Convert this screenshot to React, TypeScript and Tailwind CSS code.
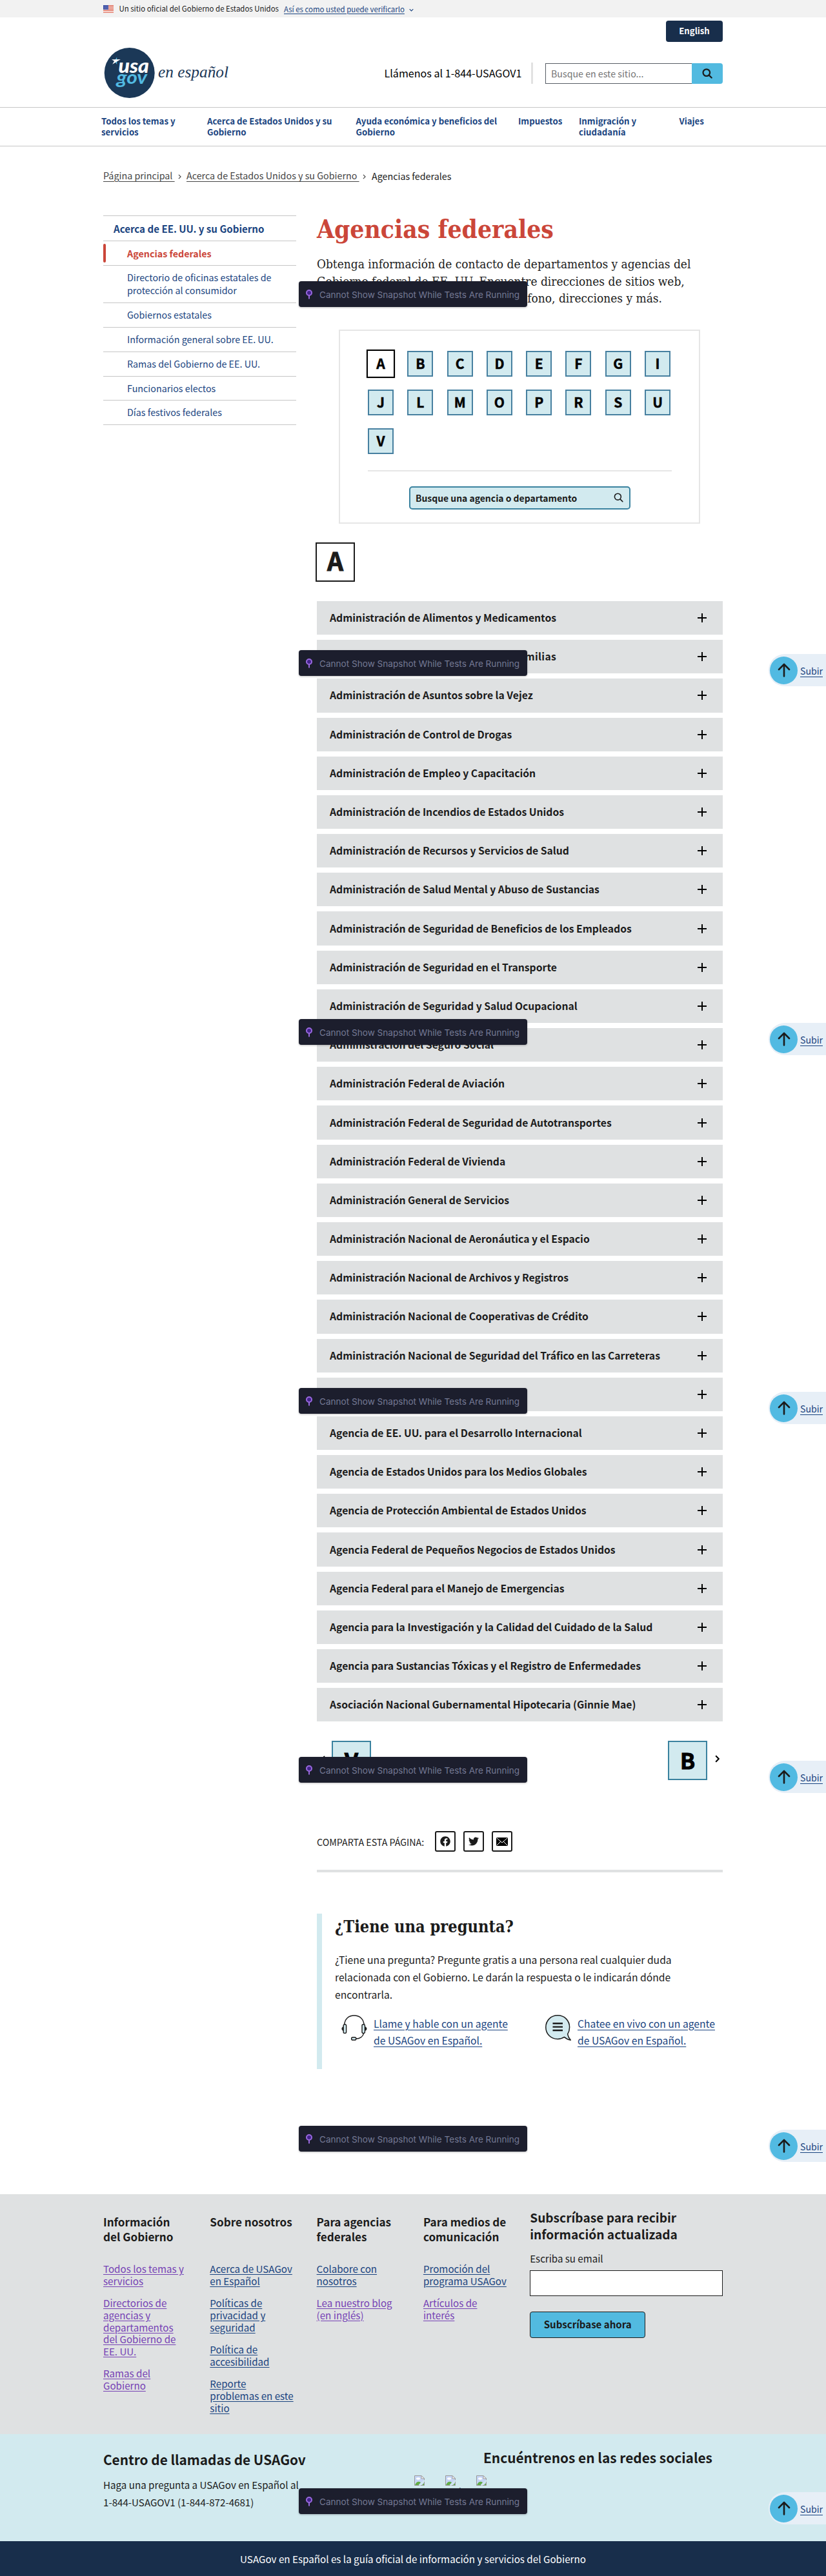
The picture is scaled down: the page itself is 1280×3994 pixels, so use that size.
import { FaFacebook, FaTwitter } from "react-icons/fa";

const agencies = [
  "Administración de Alimentos y Medicamentos",
  "Administración para los Niños y las Familias",
  "Administración de Asuntos sobre la Vejez",
  "Administración de Control de Drogas",
  "Administración de Empleo y Capacitación",
  "Administración de Incendios de Estados Unidos",
  "Administración de Recursos y Servicios de Salud",
  "Administración de Salud Mental y Abuso de Sustancias",
  "Administración de Seguridad de Beneficios de los Empleados",
  "Administración de Seguridad en el Transporte",
  "Administración de Seguridad y Salud Ocupacional",
  "Administración del Seguro Social",
  "Administración Federal de Aviación",
  "Administración Federal de Seguridad de Autotransportes",
  "Administración Federal de Vivienda",
  "Administración General de Servicios",
  "Administración Nacional de Aeronáutica y el Espacio",
  "Administración Nacional de Archivos y Registros",
  "Administración Nacional de Cooperativas de Crédito",
  "Administración Nacional de Seguridad del Tráfico en las Carreteras",
  "Agencia Central de Inteligencia",
  "Agencia de EE. UU. para el Desarrollo Internacional",
  "Agencia de Estados Unidos para los Medios Globales",
  "Agencia de Protección Ambiental de Estados Unidos",
  "Agencia Federal de Pequeños Negocios de Estados Unidos",
  "Agencia Federal para el Manejo de Emergencias",
  "Agencia para la Investigación y la Calidad del Cuidado de la Salud",
  "Agencia para Sustancias Tóxicas y el Registro de Enfermedades",
  "Asociación Nacional Gubernamental Hipotecaria (Ginnie Mae)",
];

const letters = "ABCDEFGIJLMOPRSUV".split("");

const navItems = [
  { lines: ["Todos los temas y", "servicios"], width: "w-[164px]" },
  { lines: ["Acerca de Estados Unidos y su", "Gobierno"], width: "w-[230.5px]" },
  { lines: ["Ayuda económica y beneficios del", "Gobierno"], width: "w-[251.5px]" },
  { lines: ["Impuestos"], width: "w-[94px]" },
  { lines: ["Inmigración y", "ciudadanía"], width: "w-[155.5px]" },
  { lines: ["Viajes"], width: "w-[60px]" },
];

const sideItems = [
  { lines: ["Directorio de oficinas estatales de", "protección al consumidor"], height: "h-[58px]" },
  { lines: ["Gobiernos estatales"], height: "h-[38px]" },
  { lines: ["Información general sobre EE. UU."], height: "h-[38px]" },
  { lines: ["Ramas del Gobierno de EE. UU."], height: "h-[38px]" },
  { lines: ["Funcionarios electos"], height: "h-[37px]" },
  { lines: ["Días festivos federales"], height: "h-[38px]" },
];

type FooterLink = { lines: string[]; visited?: boolean };
const footerColumns: { title: string[]; links: FooterLink[] }[] = [
  {
    title: ["Información", "del Gobierno"],
    links: [
      { lines: ["Todos los temas y", "servicios"], visited: true },
      { lines: ["Directorios de", "agencias y", "departamentos", "del Gobierno de", "EE. UU."], visited: true },
      { lines: ["Ramas del", "Gobierno"], visited: true },
    ],
  },
  {
    title: ["Sobre nosotros"],
    links: [
      { lines: ["Acerca de USAGov", "en Español"] },
      { lines: ["Políticas de", "privacidad y", "seguridad"] },
      { lines: ["Política de", "accesibilidad"] },
      { lines: ["Reporte", "problemas en este", "sitio"] },
    ],
  },
  {
    title: ["Para agencias", "federales"],
    links: [{ lines: ["Colabore con", "nosotros"] }, { lines: ["Lea nuestro blog", "(en inglés)"], visited: true }],
  },
  {
    title: ["Para medios de", "comunicación"],
    links: [{ lines: ["Promoción del", "programa USAGov"] }, { lines: ["Artículos de", "interés"], visited: true }],
  },
];

const noticeTops = ["top-[436px]", "top-[1008px]", "top-[1580px]", "top-[2152px]", "top-[2724px]", "top-[3296px]", "top-[3858px]"];
const backToTopTops = ["top-[1014px]", "top-[1586px]", "top-[2158px]", "top-[2730px]", "top-[3302px]", "top-[3864px]"];

function Lines({ lines }: { lines: string[] }) {
  return (
    <>
      {lines.map((l) => (
        <span key={l} className="block whitespace-nowrap">
          {l}
        </span>
      ))}
    </>
  );
}

function Flag() {
  return (
    <svg className="h-[12px] w-4" viewBox="0 0 16 12">
      <rect width="16" height="12" fill="#fff" />
      {[0, 2, 4, 6, 8, 10.6].map((y) => (
        <rect key={y} y={y} width="16" height="1.1" fill="#d9553f" />
      ))}
      <rect width="8" height="6.8" fill="#2a3f9d" />
      {[1, 3, 5].map((y) => [1, 3, 5, 6.7].map((x) => <rect key={`${x}-${y}`} x={x} y={y} width="0.8" height="0.8" fill="#fff" />))}
    </svg>
  );
}

function Logo() {
  return (
    <svg className="block h-[80px] w-[200px]" viewBox="0 0 200 80">
      <circle cx="40.7" cy="40" r="39" fill="#1b3857" />
      <path d="M21.2 15.5 V26.8 L18.8 23.5 V19.3 Z" fill="#52bae2" />
      <path d="M13 19.3 L26.8 19.1 L19.4 23.6 L14.2 26.8 L17 21.8 Z" fill="#fff" />
      <text x="23.5" y="40.3" textLength="47.5" lengthAdjust="spacingAndGlyphs" fontSize="31" fontWeight="900" fontStyle="italic" fontFamily="Lato, sans-serif" fill="#fff">
        usa
      </text>
      <text x="20.5" y="57.3" textLength="47.5" lengthAdjust="spacingAndGlyphs" fontSize="28" fontWeight="700" fontStyle="italic" fontFamily="Lato, sans-serif" fill="#52bae2">
        gov
      </text>
      <text x="85" y="46.7" textLength="109" lengthAdjust="spacingAndGlyphs" fontSize="26" fontStyle="italic" fontFamily="'Liberation Serif', serif" fill="#1b3857">
        en español
      </text>
    </svg>
  );
}

function SearchIcon({ size, stroke }: { size: number; stroke: number }) {
  return (
    <svg width={size} height={size} viewBox="0 0 16 16" fill="none" stroke="#1b1b1b" strokeWidth={stroke} strokeLinecap="round">
      <circle cx="6.8" cy="6.6" r="5.3" />
      <path d="M10.7 10.6 L14.7 14.5" />
    </svg>
  );
}

function Chevron({ className }: { className: string }) {
  return (
    <svg className={className} viewBox="0 0 6 10" fill="none" stroke="currentColor">
      <path d="M1 1 L5 5 L1 9" />
    </svg>
  );
}

function Headset() {
  return (
    <svg className="h-10 w-10" viewBox="0 0 40 40" fill="none" stroke="#1b1b1b" strokeWidth="1.4">
      <path d="M4.6 16 C5 6.5 11 1 19.8 1 C28.6 1 34.6 6.5 35.2 16" />
      <rect x="3.2" y="14.8" width="4.4" height="13.6" rx="2" fill="#d2eaef" />
      <rect x="32" y="14.8" width="4.4" height="13.6" rx="2" fill="#d2eaef" />
      <path d="M2.8 18 C-0.3 19.5 -0.3 23.5 2.8 25 Z" fill="#1b1b1b" stroke="none" />
      <path d="M36.8 18 C40.3 19.5 40.3 23.5 36.8 25 Z" fill="#1b1b1b" stroke="none" />
      <path d="M34.6 28.5 C33.5 33.5 29 37 22.5 37" />
      <rect x="15.6" y="34.8" width="7.2" height="4.2" rx="2.1" fill="#d2eaef" />
    </svg>
  );
}

function Chat() {
  return (
    <svg className="h-10 w-10" viewBox="0 0 40 40">
      <path
        d="M19.2 0.8 C8.6 0.8 0.8 8.8 0.8 19.2 C0.8 29.6 8.8 37.4 19.2 37.4 C23.2 37.4 26.6 36.4 29.4 34.4 C32.4 37 36 38.6 39.2 39 C36.8 36.4 35.2 33.4 34.6 29.8 C36.6 26.6 37.6 23.2 37.6 19.2 C37.6 8.8 29.8 0.8 19.2 0.8 Z"
        fill="#d2eaef"
        stroke="#1b1b1b"
        strokeWidth="1.5"
      />
      <path d="M11.5 13.2 H27 M11.5 18.6 H27 M11.5 24 H27" stroke="#1b1b1b" strokeWidth="2.4" />
    </svg>
  );
}

function BrokenImage() {
  return (
    <svg className="block h-4 w-4" viewBox="0 0 16 16">
      <path d="M0.5 0.5 H11 L15.5 5 V15.5 H0.5 Z" fill="#c6d5f5" stroke="#9a9a9a" />
      <path d="M11 0.5 V5 H15.5 Z" fill="#fff" stroke="#9a9a9a" />
      <ellipse cx="6" cy="5" rx="3" ry="1.7" fill="#fff" />
      <path d="M1 15 C3 9.5 7 8.5 10 11 L6.5 15 Z" fill="#63ad46" />
      <path d="M12 15 L15 12 V15 Z" fill="#63ad46" />
      <path d="M8 15.8 L16 7.8" stroke="#d2eaef" strokeWidth="2" />
    </svg>
  );
}

function Notice({ top }: { top: string }) {
  return (
    <div className={`absolute left-[463px] flex h-10 w-[354px] items-center rounded-[4px] bg-[#1c1e2d] pl-[11px] shadow-[0_1px_3px_rgba(0,0,0,0.25)] ${top}`}>
      <svg className="h-[15px] w-[10px]" viewBox="0 0 10 15" fill="none" stroke="#9969de">
        <circle cx="5" cy="5" r="4" strokeWidth="2" fill="#43228c" />
        <path d="M5 9 V14.5" strokeWidth="2" />
      </svg>
      <span className="ml-[11px] mt-px whitespace-nowrap font-['Inter',sans-serif] text-[13.58px] leading-5 text-[#747994]">
        Cannot Show Snapshot While Tests Are Running
      </span>
    </div>
  );
}

function BackToTop({ top }: { top: string }) {
  return (
    <a className={`absolute right-0 flex h-[50px] w-[89px] items-center rounded-l-full bg-[#e7eff7] pl-[2px] ${top}`}>
      <span className="flex h-[43px] w-[43px] items-center justify-center rounded-full bg-[#52bae2]">
        <svg className="h-[22px] w-5" viewBox="0 0 20 22" fill="none" stroke="#1b1b1b" strokeWidth="2.6" strokeLinecap="round" strokeLinejoin="round">
          <path d="M10 20.5 V2 M2 10 L10 1.8 L18 10" />
        </svg>
      </span>
      <span className="ml-1 mt-px text-[14.09px] leading-5 text-[#1a4480] underline underline-offset-[3px]">Subir</span>
    </a>
  );
}

export default function App() {
  return (
    <div className="relative h-[3994px] w-[1280px] overflow-hidden bg-white font-['Noto_Sans_CJK_SC',sans-serif] text-[#1b1b1b]">
      {/* Government banner */}
      <div className="flex h-[27px] items-center bg-[#f2f2f2] pl-[160px] text-[11.43px] leading-[27px]">
        <Flag />
        <span className="ml-[8.5px] w-[255.5px] whitespace-nowrap">Un sitio oficial del Gobierno de Estados Unidos</span>
        <a className="mt-[2px] whitespace-nowrap text-[#1a4480] underline underline-offset-2">Así es como usted puede verificarlo</a>
        <Chevron className="ml-[8px] mt-[3px] h-[7px] w-[5px] rotate-90 stroke-[1.6] text-[#1a4480]" />
      </div>

      {/* Header */}
      <header className="flex h-[139px] justify-between pl-[160px] pr-[160px]">
        <div className="pt-[46px]">
          <Logo />
        </div>
        <div className="flex flex-col items-end pt-[5px]">
          <a className="flex h-[33px] w-[88px] items-center justify-center rounded-[4px] bg-[#182e4b] pb-px text-[13.17px] font-bold text-white">English</a>
          <div className="mt-[31px] flex h-[34px] items-center">
            <span className="w-[227.5px] whitespace-nowrap text-[16.12px] leading-[34px] text-black">Llámenos al 1-844-USAGOV1</span>
            <span className="h-[33px] w-[3px] bg-[#e2e2e2]" />
            <div className="ml-[19px] mt-[2px] flex h-8 w-[275px]">
              <div className="flex w-[227px] items-center border border-r-0 border-[#565c65] pl-[8px] text-[14.22px] leading-5 text-[#757575]">
                Busque en este sitio...
              </div>
              <button className="flex w-12 items-center justify-center rounded-r-[4px] bg-[#52bae0]">
                <SearchIcon size={16} stroke={2.2} />
              </button>
            </div>
          </div>
        </div>
      </header>
      <nav className="flex h-[61px] border-y border-[#c6c6c6] pl-[157px] pt-[12px] text-[13.25px] font-bold leading-[17px] text-[#1a4480]">
        {navItems.map((n) => (
          <a key={n.lines[0]} className={n.width}>
            <Lines lines={n.lines} />
          </a>
        ))}
      </nav>

      {/* Breadcrumb */}
      <div className="mt-[35px] flex h-5 items-center whitespace-pre pl-[160px] text-[14.3px] leading-5 text-[#454545]">
        <a className="w-[116px] underline underline-offset-[3px]">Página principal </a>
        <Chevron className="mt-1 h-[8px] w-[5px] stroke-[1.4]" />
        <a className="ml-[8px] w-[274px] underline underline-offset-[3px]">Acerca de Estados Unidos y su Gobierno </a>
        <Chevron className="-ml-px mt-1 h-[8px] w-[5px] stroke-[1.4]" />
        <span className="ml-[9px] mt-[2px] text-[#1b1b1b]">Agencias federales</span>
      </div>

      <div className="flex pl-[160px]">
        {/* Side navigation */}
        <aside className="mt-[52px] w-[299px] border-t border-[#c6c6c6] text-[14.3px] leading-5 text-[#1a4480]">
          <a className="flex h-[39px] items-center border-b border-[#c6c6c6] pl-4 text-[15.1px] font-bold">Acerca de EE. UU. y su Gobierno</a>
          <a className="flex h-[38px] items-center border-b border-[#c6c6c6] font-bold text-[#cb4639]">
            <span className="h-[29px] w-1 rounded-[2px] bg-[#cb4639]" />
            <span className="ml-[33px]">Agencias federales</span>
          </a>
          {sideItems.map((s) => (
            <a key={s.lines[0]} className={`flex flex-col justify-center border-b border-[#c6c6c6] pb-px pl-[37px] ${s.height}`}>
              <Lines lines={s.lines} />
            </a>
          ))}
        </aside>

        {/* Main column */}
        <main className="ml-8 w-[629px] pt-[51.4px]">
          <h1 className="h-[62.6px] whitespace-nowrap font-['DejaVu_Serif_Condensed','DejaVu_Serif',serif] text-[38.7px] font-bold leading-[46px] text-[#cb4639]">
            Agencias federales
          </h1>
          <p className="h-[115px] font-['DejaVu_Serif_Condensed','DejaVu_Serif',serif] text-[18.96px] leading-[26.7px]">
            <Lines
              lines={[
                "Obtenga información de contacto de departamentos y agencias del",
                "Gobierno federal de EE. UU. Encuentre direcciones de sitios web,",
                "correos electrónicos, números de teléfono, direcciones y más.",
              ]}
            />
          </p>

          <section className="ml-[34px] h-[301px] w-[560px] border-2 border-[#e6e6e6] px-[43px] pt-[31px]">
            <div className="flex flex-wrap gap-x-[21.3px] gap-y-5">
              {letters.map((l) =>
                l === "A" ? (
                  <a key={l} className="-m-[2px] flex h-11 w-11 items-center justify-center border-2 border-black bg-white pb-px text-[21px] font-bold leading-9 text-black shadow-[0_0_1px_rgba(0,0,0,0.6)] [-webkit-text-stroke:0.5px_#000]">
                    {l}
                  </a>
                ) : (
                  <a key={l} className="flex h-10 w-10 items-center justify-center border-2 border-[#4780a0] bg-[#d2eaef] pb-px text-[21px] font-bold leading-9 text-black [-webkit-text-stroke:0.5px_#000]">
                    {l}
                  </a>
                ),
              )}
            </div>
            <div className="mt-[25px] h-[2px] w-[471px] bg-[#e6e6e6]" />
            <div className="ml-[64px] mt-[23px] flex h-9 w-[343px] items-center justify-between rounded-[5px] border-2 border-[#3a829f] bg-[#d2eaef] pl-[8px] pr-[9px] text-[13.93px] font-bold leading-5">
              <span>Busque una agencia o departamento</span>
              <SearchIcon size={15} stroke={1.7} />
            </div>
          </section>

          <h2 className="-ml-[2px] mt-[29px] flex h-[61px] w-[61px] items-center justify-center border-2 border-[#1b1b1b] pb-[7px] text-[39px] font-bold leading-[50px] [-webkit-text-stroke:1px_#1b1b1b]">A</h2>

          <ul className="mt-[30px] flex flex-col gap-2">
            {agencies.map((a, i) => (
              <li key={a} className="flex h-[52.2px] items-center justify-between bg-[#dfe1e2] pl-5 pr-[25px] text-[15.71px] font-bold">
                <span className={`whitespace-nowrap leading-6 ${i === 1 ? "tracking-[0.35px]" : ""}`}>{a}</span>
                <svg className="h-[14px] w-[14px]" viewBox="0 0 14 14" stroke="#000" strokeWidth="2" shapeRendering="crispEdges">
                  <path d="M7 0 V14 M0 7 H14" />
                </svg>
              </li>
            ))}
          </ul>

          <div className="mt-[30px] flex h-[61px] items-center justify-between pr-[5px] text-[34px] font-bold leading-[50px] text-black">
            <div className="flex items-center">
              <Chevron className="ml-[7px] mr-[10px] h-[12px] w-[6px] -translate-y-[3px] rotate-180 stroke-[1.8]" />
              <a className="flex h-[61px] w-[61px] items-center justify-center border-2 border-[#3a829f] bg-[#d2eaef] pb-px [-webkit-text-stroke:1px_#000]">V</a>
            </div>
            <div className="flex items-center">
              <a className="flex h-[61px] w-[61px] items-center justify-center border-2 border-[#3a829f] bg-[#d2eaef] pb-px [-webkit-text-stroke:1px_#000]">B</a>
              <Chevron className="mb-[6px] ml-3 h-[12px] w-[7px] stroke-[1.8]" />
            </div>
          </div>

          <div className="mt-[79px] flex h-8 items-center gap-3 text-[14.26px]">
            <span className="w-[171px] whitespace-nowrap pt-px leading-5">COMPARTA ESTA PÁGINA:</span>
            <a className="flex h-8 w-8 items-center justify-center rounded-[3px] border-2 border-[#1b1b1b]">
              <FaFacebook size={16} />
            </a>
            <a className="flex h-8 w-8 items-center justify-center rounded-[3px] border-2 border-[#1b1b1b]">
              <FaTwitter size={16} />
            </a>
            <a className="flex h-8 w-8 items-center justify-center rounded-[3px] border-2 border-[#1b1b1b]">
              <svg className="h-[13px] w-[18px]" viewBox="0 0 18 13">
                <rect width="18" height="13" fill="#000" />
                <path d="M0.5 0.5 L9 8 L17.5 0.5 M0.5 12.5 L6.8 6.2 M17.5 12.5 L11.2 6.2" fill="none" stroke="#fff" />
              </svg>
            </a>
          </div>
          <div className="mt-7 h-1 bg-[#dfe1e2]" />

          <section className="mt-16 h-[241px] border-l-8 border-[#d2eaef] pl-5 pt-[2px]">
            <h3 className="whitespace-nowrap pt-px font-['DejaVu_Serif_Condensed','DejaVu_Serif',serif] text-[25.2px] font-bold leading-[34px]">¿Tiene una pregunta?</h3>
            <p className="mt-[22px] text-[15.7px] leading-[26.7px]">
              <Lines
                lines={[
                  "¿Tiene una pregunta? Pregunte gratis a una persona real cualquier duda",
                  "relacionada con el Gobierno. Le darán la respuesta o le indicarán dónde",
                  "encontrarla.",
                ]}
              />
            </p>
            <div className="mt-[17px] flex pl-[10px] text-[15.7px] leading-[26.7px] text-[#1a4480] underline underline-offset-[3px]">
              <div className="flex w-[316px]">
                <Headset />
                <a className="ml-[10px] mt-px">
                  <Lines lines={["Llame y hable con un agente", "de USAGov en Español."]} />
                </a>
              </div>
              <div className="flex">
                <Chat />
                <a className="ml-[10px] mt-px">
                  <Lines lines={["Chatee en vivo con un agente", "de USAGov en Español."]} />
                </a>
              </div>
            </div>
          </section>
        </main>
      </div>

      {/* Footer */}
      <footer>
        <div className="mt-[193.2px] flex h-[372px] bg-[#dfe1e2] pl-[160px]">
          {footerColumns.map((c) => (
            <div key={c.title[0]} className="w-[165.3px] pt-[31.5px]">
              <h4 className="h-[75.2px] text-[17.11px] font-bold leading-[23px]">
                <Lines lines={c.title} />
              </h4>
              <div className="flex flex-col gap-4 text-[15.15px] leading-[18.6px]">
                {c.links.map((l) => (
                  <a key={l.lines[0]} className={`underline underline-offset-2 ${l.visited ? "text-[#7642b5]" : "text-[#1a4480]"}`}>
                    <Lines lines={l.lines} />
                  </a>
                ))}
              </div>
            </div>
          ))}
          <div className="w-[299px] pt-[23.6px]">
            <h4 className="text-[19.16px] font-bold leading-[26px]">
              <Lines lines={["Subscríbase para recibir", "información actualizada"]} />
            </h4>
            <label className="mt-[13.4px] block text-[15.09px] leading-5">Escriba su email</label>
            <div className="mt-[9px] h-10 border border-[#1b1b1b] bg-white" />
            <button className="mt-6 flex h-[41px] w-[179px] items-center justify-center rounded-[4px] border border-[#1b1b1b] bg-[#52bae0] text-[15.05px] font-bold leading-6">
              Subscríbase ahora
            </button>
          </div>
        </div>
        <div className="flex h-[166px] bg-[#d2eaef] pl-[160px]">
          <div className="w-[482px] pt-[24px]">
            <h4 className="text-[20.78px] font-bold leading-[30px]">Centro de llamadas de USAGov</h4>
            <p className="mt-[11px] text-[15.15px] leading-[27px]">
              <Lines lines={["Haga una pregunta a USAGov en Español al", "1-844-USAGOV1 (1-844-872-4681)"]} />
            </p>
          </div>
          <div className="pt-[21px]">
            <h4 className="whitespace-nowrap pl-[107px] text-[20.86px] font-bold leading-[30px]">Encuéntrenos en las redes sociales</h4>
            <div className="mt-[13px] flex text-[15.15px] leading-[18px]">
              {["Face", "Twitte", "Yout"].map((t) => (
                <div key={t} className="w-12">
                  <BrokenImage />
                  {t}
                </div>
              ))}
            </div>
          </div>
        </div>
        <div className="flex h-[54px] justify-center bg-[#182e4b] text-[15.2px] leading-[55px] text-white">
          USAGov en Español es la guía oficial de información y servicios del Gobierno
        </div>
      </footer>

      {noticeTops.map((t) => (
        <Notice key={t} top={t} />
      ))}
      {backToTopTops.map((t) => (
        <BackToTop key={t} top={t} />
      ))}
    </div>
  );
}
